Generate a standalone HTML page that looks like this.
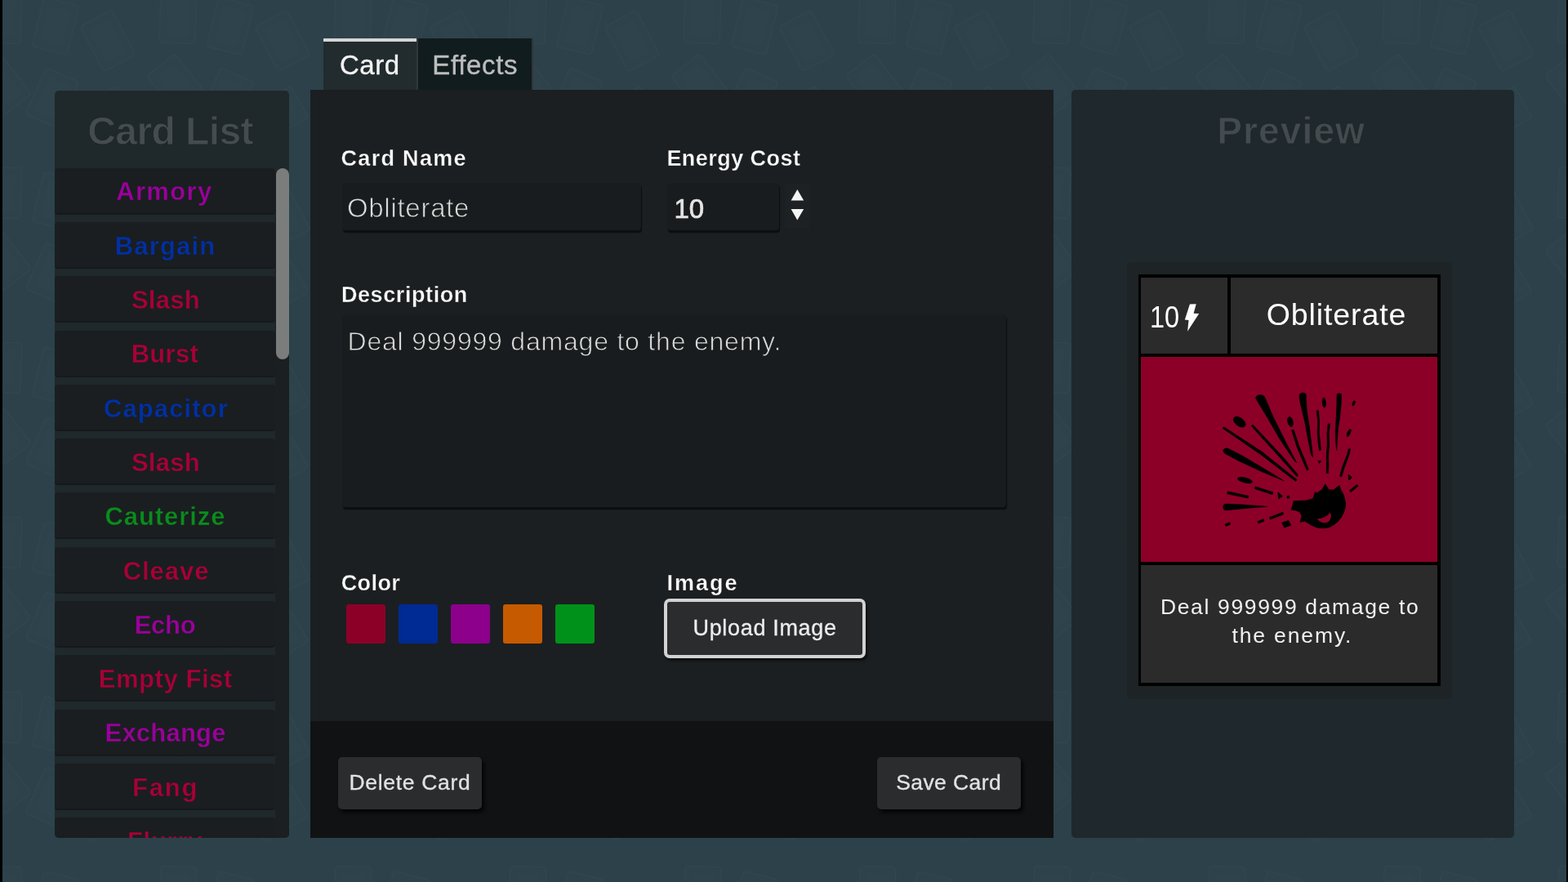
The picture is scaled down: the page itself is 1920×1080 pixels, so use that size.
<!DOCTYPE html>
<html lang="en">
<head>
<meta charset="utf-8">
<title>Card Editor</title>
<style>
html,body{margin:0;padding:0;}
body{width:1920px;height:1080px;overflow:hidden;position:relative;background:#2c414a;font-family:"Liberation Sans",sans-serif;}
.abs{position:absolute;}
.t{position:absolute;line-height:1;white-space:nowrap;margin:0;padding:0;will-change:opacity;}
#bgpat{position:absolute;left:0;top:0;width:1920px;height:1080px;}
.stripL{position:absolute;left:0;top:0;width:3px;height:1080px;background:#000;}
.stripR{position:absolute;left:1918px;top:0;width:2px;height:1080px;background:#000;}

/* ---------- card list ---------- */
#list{position:absolute;left:67px;top:111px;width:287px;height:915px;background:rgba(30,36,39,0.88);border-radius:5px;overflow:hidden;}
#list .title{font-size:48px;font-weight:bold;color:#454c50;-webkit-text-stroke:0.9px #20282b;}
#list .track{position:absolute;left:270px;top:94.5px;width:17px;height:821px;background:#1b1f21;border-radius:8px 8px 5px 0;}
#list .thumb{position:absolute;left:271px;top:94.5px;width:16px;height:234px;background:#7b7d7c;border-radius:8px;}
.item{position:absolute;left:0;width:270px;height:55px;background:#1a1e20;border-radius:4px;border-bottom:2px solid #16191b;}
.it{font-size:31px;font-weight:bold;-webkit-text-stroke:0.4px #1a1e20;}
.cR{color:#a70037;}.cB{color:#0030a4;}.cP{color:#9b009b;}.cG{color:#0a8c1c;}.cO{color:#c85a00;}

/* ---------- tabs ---------- */
.tab1{position:absolute;left:396px;top:47px;width:114.2px;height:63px;background:#222b2e;border-top:4px solid #d6d6d6;box-sizing:border-box;}
.tab2{position:absolute;left:512px;top:47px;width:141px;height:63px;background:#111c1f;border-right:2px solid #30373a;box-sizing:border-box;}

/* ---------- main ---------- */
#main{position:absolute;left:380px;top:110px;width:910px;height:916px;background:#1b1f21;}
#main .foot{position:absolute;left:0;top:773px;width:910px;height:143px;background:#101214;}
.lbl{font-size:26px;font-weight:bold;color:#fff;-webkit-text-stroke:0.35px #1b1f21;}
.inp{position:absolute;background:#191c1e;border-radius:4px;box-shadow:1px 3px 1px #0c0e0f;}
.val{color:#cfcfcf;}
.sw{position:absolute;top:630px;width:48px;height:48px;border-radius:3px;}
.btn{position:absolute;background:#2b2c2e;border-radius:5px;box-shadow:3px 4px 4px rgba(0,0,0,.75);}
.upl{position:absolute;left:432.7px;top:623.4px;width:247.4px;height:72.7px;box-sizing:border-box;border:4px solid #d2d2d2;border-radius:7px;background:#2b2c2e;box-shadow:2px 3px 3px rgba(0,0,0,.55);}

/* ---------- preview ---------- */
#prev{position:absolute;left:1312px;top:110px;width:542px;height:916px;background:rgba(30,38,41,0.9);border-radius:5px;}
#cardwrap{position:absolute;left:1380px;top:321px;width:398px;height:535px;background:#1e2325;border-radius:5px;}
#card{position:absolute;left:1394px;top:336px;width:370px;height:504px;background:#000;}
.cell{position:absolute;background:#2b2b2b;}
</style>
</head>
<body>
<svg id="bgpat" width="1920" height="1080">
<defs>
<g id="pc"><rect x="-22" y="-31" width="44" height="62" rx="4" fill="rgba(255,255,255,0.004)" stroke="rgba(255,255,255,0.016)" stroke-width="1.5"/><rect x="-14" y="-22" width="28" height="44" rx="2" fill="rgba(255,255,255,0.007)"/></g>
<pattern id="pp" width="214" height="214" patternUnits="userSpaceOnUse" patternTransform="translate(-40,-20)">
<use href="#pc" transform="translate(44,42) rotate(2)"/>
<use href="#pc" transform="translate(108,52) rotate(14)"/>
<use href="#pc" transform="translate(172,70) rotate(-28)"/>
<use href="#pc" transform="translate(42,124) rotate(-38)"/>
<use href="#pc" transform="translate(104,140) rotate(24)"/>
<use href="#pc" transform="translate(166,160) rotate(60)"/>
</pattern>
</defs>
<rect width="1920" height="1080" fill="url(#pp)"/>
</svg>
<div class="stripL"></div><div class="stripR"></div>

<!-- CARD LIST -->
<div id="list">
  <div class="t title" id="tList" style="left:40.2px;top:25.6px;font-size:48px;letter-spacing:-0.58px;">Card List</div>
  <div class="track"></div>
  <div class="item" style="top:94.6px"></div><div class="t it cP" id="i0" style="left:75.2px;top:108.4px;font-size:31px;letter-spacing:1.35px;">Armory</div>
  <div class="item" style="top:160.9px"></div><div class="t it cB" id="i1" style="left:73.8px;top:174.7px;font-size:31px;letter-spacing:1.15px;">Bargain</div>
  <div class="item" style="top:227.2px"></div><div class="t it cR" id="i2" style="left:93.9px;top:241.0px;font-size:31px;letter-spacing:0.30px;">Slash</div>
  <div class="item" style="top:293.5px"></div><div class="t it cR" id="i3" style="left:93.7px;top:307.3px;font-size:31px;letter-spacing:0.30px;">Burst</div>
  <div class="item" style="top:359.8px"></div><div class="t it cB" id="i4" style="left:60.0px;top:373.6px;font-size:31px;letter-spacing:1.09px;">Capacitor</div>
  <div class="item" style="top:426.1px"></div><div class="t it cR" id="i5" style="left:93.9px;top:439.9px;font-size:31px;letter-spacing:0.30px;">Slash</div>
  <div class="item" style="top:492.4px"></div><div class="t it cG" id="i6" style="left:61.4px;top:506.2px;font-size:31px;letter-spacing:0.94px;">Cauterize</div>
  <div class="item" style="top:558.7px"></div><div class="t it cR" id="i7" style="left:83.7px;top:572.5px;font-size:31px;letter-spacing:0.95px;">Cleave</div>
  <div class="item" style="top:625.0px"></div><div class="t it cP" id="i8" style="left:97.7px;top:638.8px;font-size:31px;letter-spacing:-0.29px;">Echo</div>
  <div class="item" style="top:691.3px"></div><div class="t it cR" id="i9" style="left:53.7px;top:705.1px;font-size:31px;letter-spacing:0.56px;">Empty Fist</div>
  <div class="item" style="top:757.6px"></div><div class="t it cP" id="i10" style="left:61.5px;top:771.4px;font-size:31px;letter-spacing:0.21px;">Exchange</div>
  <div class="item" style="top:823.9px"></div><div class="t it cR" id="i11" style="left:95.0px;top:837.7px;font-size:31px;letter-spacing:1.81px;">Fang</div>
  <div class="item" style="top:890.2px"></div><div class="t it cR" id="i12" style="left:88.9px;top:904.0px;font-size:31px;letter-spacing:0.74px;">Flurry</div>
  <div class="thumb"></div>
</div>

<!-- TABS -->
<div class="tab1"></div>
<div class="tab2"></div>
<div class="abs" style="left:510.2px;top:47px;width:1.8px;height:63px;background:#30373a;"></div>
<div class="t" id="tCard" style="left:416.0px;top:62.7px;font-size:33px;letter-spacing:0.50px;color:#f2f2f2;-webkit-text-stroke:0.35px #f2f2f2;">Card</div>
<div class="t" id="tEff" style="left:529.2px;top:62.7px;font-size:33px;letter-spacing:0.69px;color:#bdbdbd;-webkit-text-stroke:0.35px #bdbdbd;">Effects</div>

<!-- MAIN -->
<div id="main">
  <div class="foot"></div>
  <div class="t lbl" id="lName" style="left:37.5px;top:70.9px;font-size:27px;letter-spacing:1.32px;">Card Name</div>
  <div class="t lbl" id="lCost" style="left:436.4px;top:70.6px;font-size:27px;letter-spacing:0.45px;">Energy Cost</div>
  <div class="inp" style="left:38.7px;top:114.4px;width:366px;height:57.5px;"></div>
  <div class="t val" id="vName" style="left:44.9px;top:128.1px;font-size:33px;letter-spacing:0.72px;-webkit-text-stroke:0.8px #191c1e;color:#dcdcdc;">Obliterate</div>
  <div class="inp" style="left:437px;top:114.4px;width:136.5px;height:57.5px;"></div>
  <div class="t" id="vCost" style="left:445.4px;top:129.0px;font-size:33px;letter-spacing:-0.10px;color:#e4e4e4;-webkit-text-stroke:0.7px #e4e4e4;">10</div>
  <svg class="abs" style="left:581px;top:114px" width="31" height="56" viewBox="961 224 31 56"><rect x="961" y="224.5" width="30.5" height="55" rx="3" fill="#1d2123"/><path d="M976.3 232 L984.2 245.6 H968.6Z M976.3 269.5 L984.2 256 H968.6Z" fill="#f4f4f4"/></svg>
  <div class="t lbl" id="lDesc" style="left:37.9px;top:237.5px;font-size:27px;letter-spacing:0.59px;">Description</div>
  <div class="inp" style="left:38.7px;top:275.4px;width:813px;height:235.5px;"></div>
  <div class="t val" id="vDesc" style="left:45.5px;top:291.5px;font-size:32px;letter-spacing:0.79px;-webkit-text-stroke:0.8px #191c1e;color:#dcdcdc;">Deal 999999 damage to the enemy.</div>
  <div class="t lbl" id="lColor" style="left:37.7px;top:590.9px;font-size:27px;letter-spacing:0.40px;">Color</div>
  <div class="sw" style="left:44px;background:#8c0028"></div>
  <div class="sw" style="left:108px;background:#002a94"></div>
  <div class="sw" style="left:172px;background:#8c008c"></div>
  <div class="sw" style="left:236px;background:#c65a00"></div>
  <div class="sw" style="left:300px;background:#00911a"></div>
  <div class="t lbl" id="lImage" style="left:436.4px;top:590.6px;font-size:27px;letter-spacing:2.05px;">Image</div>
  <div class="upl"></div>
  <div class="t" id="tUpl" style="left:468.5px;top:646.1px;font-size:27px;letter-spacing:0.67px;color:#ececec;-webkit-text-stroke:0.3px #ececec;">Upload Image</div>
  <div class="btn" style="left:34px;top:817px;width:175.7px;height:64px;"></div>
  <div class="t" id="tDel" style="left:47.5px;top:835.3px;font-size:26.5px;letter-spacing:0.69px;color:#e2e2e2;-webkit-text-stroke:0.3px #e2e2e2;">Delete Card</div>
  <div class="btn" style="left:694px;top:817px;width:175.7px;height:64px;"></div>
  <div class="t" id="tSave" style="left:717.2px;top:835.3px;font-size:26.5px;letter-spacing:0.42px;color:#e2e2e2;-webkit-text-stroke:0.3px #e2e2e2;">Save Card</div>
</div>

<!-- PREVIEW -->
<div id="prev"></div>
<div class="t" id="tPrev" style="left:1490.3px;top:136.6px;font-size:46px;letter-spacing:1.11px;font-weight:bold;color:#434b4f;-webkit-text-stroke:0.8px #20292c;">Preview</div>
<div id="cardwrap"></div>
<div id="card">
  <div class="cell" style="left:3px;top:4px;width:106px;height:93px;"></div>
  <div class="cell" style="left:113px;top:4px;width:253px;height:93px;"></div>
  <div class="abs" style="left:3px;top:101px;width:363px;height:251px;background:#8c0028;"></div>
  <div class="cell" style="left:3px;top:356px;width:363px;height:144px;"></div>
</div>
<div class="t" id="cCost" style="left:1408px;top:370.8px;font-size:36px;color:#fff;transform-origin:0 0;transform:scaleX(0.9);">10</div>
<svg class="abs" style="left:1445px;top:368px" width="28" height="42" viewBox="1445 368 28 42"><path d="M1456.9 372.4 L1464.7 372.2 L1461.6 383.7 L1468.2 383.9 L1454.1 405.8 L1455.5 391.9 L1450.8 391.6 Z" fill="#fff"/></svg>
<div class="t" id="cName" style="left:1550.7px;top:366.8px;font-size:37.5px;letter-spacing:0.90px;color:#fff;">Obliterate</div>
<div class="t" id="cD1" style="left:1420.9px;top:729.5px;font-size:26.5px;letter-spacing:1.65px;color:#f0f0f0;">Deal 999999 damage to</div>
<div class="t" id="cD2" style="left:1508.4px;top:765.1px;font-size:26.5px;letter-spacing:1.88px;color:#f0f0f0;">the enemy.</div>

<!-- bomb icon -->
<svg class="abs" id="bomb" style="left:1397px;top:437px" width="363" height="251" viewBox="1397 437 363 251">
<g fill="#000" stroke="#000" stroke-width="0.7" stroke-linejoin="round">
<!-- big ray A -->
<path d="M1537.5 487.3 Q1538 484.2 1542.5 483.6 Q1547.5 483.4 1549.2 487.3 L1559.5 511.6 L1573.4 539.3 L1588 567 L1585 564.3 L1567 537.6 L1551 509.8 L1539.5 491 Z"/>
<!-- top ray B -->
<path d="M1591 484.5 Q1591.5 481.2 1595 481 Q1599 480.8 1599.2 484 L1600.2 502.7 L1603.2 521.5 L1605.3 539.3 L1607.6 559.5 L1605.6 557.2 L1601.5 537.4 L1598 517.5 L1593.6 499.7 L1591.3 489 Z"/>
<!-- right ray C -->
<path d="M1637 483 Q1637.3 481.8 1640 481.7 Q1642.7 481.8 1642.6 483.5 L1642.2 494.8 L1640.8 509.6 L1638.4 525.5 L1637.4 539.3 L1636.7 551.5 L1635.5 539.3 L1635.2 527.5 L1636.3 509.6 L1636.9 494.8 Z"/>
<ellipse cx="1621.3" cy="493" rx="2.1" ry="6" transform="rotate(-4 1621.3 493)"/>
<ellipse cx="1657.6" cy="493.8" rx="1.4" ry="3.2" transform="rotate(22 1657.6 493.8)"/>
<ellipse cx="1517.7" cy="516.6" rx="8.4" ry="5" transform="rotate(38 1517.7 516.6)"/>
<!-- thin ray G -->
<path d="M1497.3 524.6 L1498.6 522.8 L1545 553 L1588.3 587.6 L1586.6 589.4 L1543 556 Z"/>
<!-- thin ray H -->
<path d="M1532.2 521.6 L1534 520 L1570 558.5 L1589.8 581.8 L1588 583.4 L1567.5 560.5 Z"/>
<!-- thick ray I -->
<path d="M1497.7 551.5 Q1499.5 548 1503.5 549 L1522 558.5 L1548 574 L1572.5 588.9 L1545 577.5 L1516 564 L1499 554.8 Z"/>
<!-- blob J with tail -->
<ellipse cx="1580" cy="516.4" rx="3.1" ry="6.2" transform="rotate(-14 1580 516.4)"/>
<path d="M1581.6 526.8 L1584 526 L1591 547 L1597 561 L1602.4 575 L1600.2 575.8 L1594.5 562.5 L1588.3 548 Z"/>
<!-- wiggly K -->
<path d="M1612.2 503 Q1613.4 501.6 1614.6 503 L1615.6 517 L1615.2 530 L1616.6 541 L1617.4 551 L1615.4 551.6 L1614 541 L1613.2 529 L1613.6 517 Z"/>
<!-- wiggly L -->
<path d="M1626 519.5 Q1627.4 518 1628.4 519.2 L1627.2 531 L1627.6 545 L1626.6 559 L1627 570 L1626.3 579.5 L1624.2 579.2 L1624.4 569 L1624.2 558 L1625.2 545 L1625 531 Z"/>
<ellipse cx="1651.7" cy="530" rx="1.7" ry="4.9" transform="rotate(24 1651.7 530)"/>
<!-- curve N -->
<path d="M1651.4 549.6 L1653.7 550 L1651.6 558 L1648.6 566 L1645.6 574 L1643 583.6 L1640.6 583 L1643.2 573 L1646.2 565 L1649.4 557 Z"/>
<path d="M1614.2 564.3 L1617.6 564.6 L1615.4 567.6 Z"/>
<!-- triangle P -->
<path d="M1651 581 L1655.8 584.6 L1651.7 588 Z"/>
<!-- line Q -->
<path d="M1661.6 593.2 L1663.2 595.2 L1654.2 602.6 L1652.6 600.6 Z"/>
<ellipse cx="1524.5" cy="588" rx="9.2" ry="3" transform="rotate(14 1524.5 588)"/>
<path d="M1537 595.8 L1558.9 602.8 L1558.1 605.5 L1536.4 598.4 Z"/>
<path d="M1503.3 601.8 L1528.9 607.4 L1528.3 610 L1502.8 604.7 Z"/>
<path d="M1564.8 602.8 L1570.5 607.5 L1565.8 611 Z"/>
<circle cx="1577.4" cy="608.7" r="1.6"/>
<!-- thick ray W -->
<path d="M1497.8 619.6 Q1498.4 617.2 1501 617.1 L1519.7 617.8 L1551.6 620.3 L1529.6 622.1 L1501 624.8 Q1498.4 624.8 1498 622.6 Z"/>
<path d="M1554.5 633.5 L1570.7 627.2 L1571.7 629.8 L1555.4 636.1 Z"/>
<path d="M1540 638.5 L1547 635.6 L1548 638 L1541 641 Z"/>
<path d="M1500 642 L1505.8 639.5 L1506.8 641.9 L1501 644.4 Z"/>
<path d="M1569.7 640.2 L1577.7 637.3 L1580.9 643.2 L1572.7 646 Z"/>
<!-- bomb body -->
<path d="M1581.1 624.4 L1584.1 613.5 L1599 613 L1607.9 610.5 L1610.4 602.6 L1612.8 603.6 L1618.8 599.6 L1622.7 592.7 L1627.2 599.6 L1632.6 600.1 L1640.1 594.2 L1641.6 599.6 Q1646 605 1647.5 615.5 Q1648 622 1645.5 627.4 Q1643 634 1638.6 638.3 Q1634 643 1628.7 645.2 Q1623 647.2 1616.8 646.7 Q1611 646 1605.9 643.2 L1598 638.3 L1592 639.2 L1594 632.3 L1592 627.4 L1586.6 624.9 Z"/>
</g>
<path d="M1612.8 635.3 Q1618 635.2 1621.7 633.3 Q1626 631 1628.7 627.4 Q1630.4 630.5 1629.7 633.6 Q1629 637 1626.5 638.9 Q1623.5 640.6 1619.8 640.2 Q1616.5 639.6 1612.8 635.3 Z" fill="#8c0028"/>
</svg>
</body>
</html>
